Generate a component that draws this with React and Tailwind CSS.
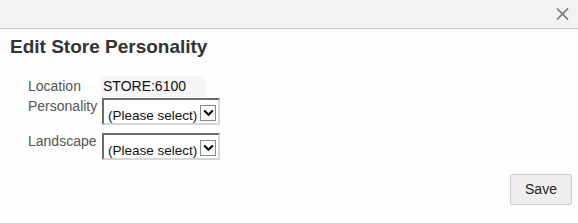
import React from 'react';

function Select() {
    return (
        <div className="flex items-end w-[118px] h-[27px] border-2 border-t-[#6b6b6b] border-l-[#6b6b6b] border-b-[#d6d6d6] border-r-[#d6d6d6] bg-white">
            <span className="flex-1 pl-[4px] text-[13.5px] leading-[14px] text-[#111] whitespace-nowrap">(Please select)</span>
            <span className="w-[16px] h-[16px] mr-[2px] mb-[2px] flex items-center justify-center border border-[#8a8a8a] bg-[#fafafa]">
                <svg width="11" height="8" viewBox="0 0 11 8" fill="none">
                    <path d="M1.2 1.5 L5.5 5.8 L9.8 1.5" stroke="#000" strokeWidth="2" />
                </svg>
            </span>
        </div>
    );
}

export default function App() {
    return (
        <div className="w-[578px] h-[223px] bg-[#fdfdfd] font-['Liberation_Sans',Arial,sans-serif] flex flex-col">
            <div className="h-[29px] shrink-0 bg-[#f2f2f2] border-b border-[#cccccc] flex items-center justify-end pr-[9px]">
                <svg width="13" height="12" viewBox="0 0 13 12">
                    <path d="M1 0.5 L12 11.5 M12 0.5 L1 11.5" stroke="#777" strokeWidth="1.7" />
                </svg>
            </div>

            <h1 className="text-[19px] font-bold text-[#333] pl-[10px] pt-[7px] leading-[22px]">Edit Store Personality</h1>

            <div className="pl-[28px] pt-[18px] grid grid-cols-[74px_auto] text-[14px] items-start">
                <span className="text-[#555] leading-[21px]">Location</span>
                <span className="w-[104px] h-[21px] bg-[#f5f5f5] text-[#111] pl-[2px] leading-[21px] -ml-[1px]">STORE:6100</span>

                <span className="text-[#555] leading-[16px] mt-[1px]">Personality</span>
                <div className="mt-[1px]"><Select /></div>

                <span className="text-[#555] leading-[16px] mt-[8px]">Landscape</span>
                <div className="mt-[8px]"><Select /></div>
            </div>

            <div className="flex justify-end pr-[6px] mt-[14px]">
                <button className="w-[62px] h-[31px] bg-[#eeeeee] border border-[#cccccc] rounded-[2px] text-[14px] text-[#222]">Save</button>
            </div>
        </div>
    );
}
